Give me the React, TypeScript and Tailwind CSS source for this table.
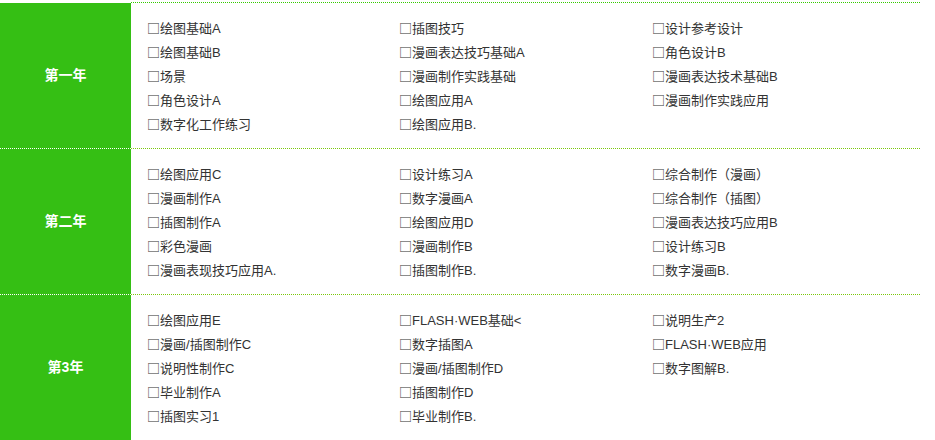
const years = [
  {
    label: '第一年',
    cols: [
      ['绘图基础A', '绘图基础B', '场景', '角色设计A', '数字化工作练习'],
      ['插图技巧', '漫画表达技巧基础A', '漫画制作实践基础', '绘图应用A', '绘图应用B.'],
      ['设计参考设计', '角色设计B', '漫画表达技术基础B', '漫画制作实践应用'],
    ],
  },
  {
    label: '第二年',
    cols: [
      ['绘图应用C', '漫画制作A', '插图制作A', '彩色漫画', '漫画表现技巧应用A.'],
      ['设计练习A', '数字漫画A', '绘图应用D', '漫画制作B', '插图制作B.'],
      ['综合制作（漫画）', '综合制作（插图）', '漫画表达技巧应用B', '设计练习B', '数字漫画B.'],
    ],
  },
  {
    label: '第3年',
    cols: [
      ['绘图应用E', '漫画/插图制作C', '说明性制作C', '毕业制作A', '插图实习1'],
      ['FLASH·WEB基础<', '数字插图A', '漫画/插图制作D', '插图制作D', '毕业制作B.'],
      ['说明生产2', 'FLASH·WEB应用', '数字图解B.'],
    ],
  },
];

// 1px dotted line drawn with a gradient (Chrome's 1px dotted border comes out faint)
function Divider() {
  return (
    <div className="flex h-px">
      <div className="w-[131px] shrink-0 bg-[#35bf14] bg-[linear-gradient(to_right,#ffffff_50%,transparent_50%)] bg-[length:2px_1px] bg-repeat-x" />
      <div className="flex-1 bg-[linear-gradient(to_right,#7cc80c_50%,transparent_50%)] bg-[length:2px_1px] bg-repeat-x" />
    </div>
  );
}

export default function App() {
  return (
    <div
      className="w-[935px] h-[440px] overflow-hidden bg-white pt-[2px]"
      style={{ fontFamily: '"Liberation Sans", "Noto Sans CJK SC", sans-serif' }}
    >
      <div className="w-[920px]">
        <div className="h-px ml-[131px] bg-[linear-gradient(to_right,#33cc00_50%,transparent_50%)] bg-[length:2px_1px] bg-repeat-x" />
        {years.map((year, i) => (
          <div key={year.label}>
            <div className="flex h-[145px]">
              <div className="w-[131px] shrink-0 bg-[#35bf14] flex items-center justify-center text-white font-bold text-[14px]">
                {year.label}
              </div>
              <div className="flex-1 pl-[16px] pt-[13px] grid grid-cols-[252px_253px_1fr] content-start text-[13px] leading-[23px] text-[#333333]">
                {year.cols.map((col, j) => (
                  <ul key={j}>
                    {col.map((item) => (
                      <li key={item}>
                        <span style={{ fontFamily: '"Noto Sans CJK SC", sans-serif' }}>□</span>
                        {item}
                      </li>
                    ))}
                  </ul>
                ))}
              </div>
            </div>
            {i < years.length - 1 && <Divider />}
          </div>
        ))}
      </div>
    </div>
  );
}
